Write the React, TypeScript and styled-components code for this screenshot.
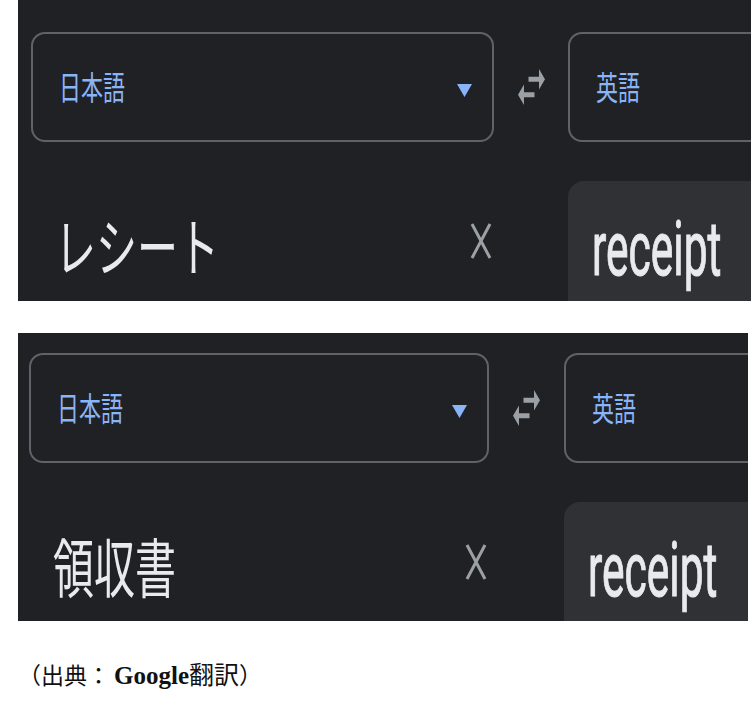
import React from "react";
import styled, { createGlobalStyle } from "styled-components";

const GlobalStyle = createGlobalStyle`
  html, body {
    margin: 0;
    padding: 0;
    background: #ffffff;
  }
  body {
    width: 751px;
    height: 705px;
    overflow: hidden;
  }
`;

const Page = styled.main`
  display: flex;
  flex-direction: column;
  width: 751px;
  padding-left: 18px;
  box-sizing: border-box;
`;

const Shot = styled.section<{ $w: number; $h: number; $pt: number; $pl: number; $mt: number }>`
  display: flex;
  flex-direction: column;
  width: ${(p) => p.$w}px;
  height: ${(p) => p.$h}px;
  margin-top: ${(p) => p.$mt}px;
  padding: ${(p) => p.$pt}px 0 0 ${(p) => p.$pl}px;
  box-sizing: border-box;
  background: #202124;
  overflow: hidden;
`;

const LangBar = styled.div`
  display: flex;
  align-items: center;
  height: 110px;
  flex-shrink: 0;
`;

const LangBox = styled.div<{ $w: number }>`
  display: flex;
  align-items: center;
  justify-content: space-between;
  flex-shrink: 0;
  width: ${(p) => p.$w}px;
  height: 100%;
  padding: 0 20px 0 26px;
  box-sizing: border-box;
  border: 2px solid #5f6368;
  border-radius: 14px;
`;

const LangLabel = styled.span`
  display: inline-block;
  font-family: "Noto Sans CJK JP", sans-serif;
  font-size: 22px;
  line-height: 1;
  color: #8ab4f8;
  transform: scaleY(1.5);
  margin-top: -4px;
`;

const DropArrow = styled.svg`
  width: 15px;
  height: 13px;
  margin-top: 6px;
  flex-shrink: 0;
`;

const SwapSlot = styled.div<{ $w: number }>`
  display: flex;
  justify-content: center;
  align-items: center;
  flex-shrink: 0;
  width: ${(p) => p.$w}px;
`;

const SwapIcon = styled.svg`
  width: 27px;
  height: 36px;
`;

const ContentRow = styled.div`
  display: flex;
  margin-top: 39px;
  height: 140px;
  flex-shrink: 0;
`;

const Source = styled.div<{ $w: number }>`
  display: flex;
  align-items: center;
  justify-content: space-between;
  flex-shrink: 0;
  width: ${(p) => p.$w}px;
  height: 128px;
  padding: 0 2px 0 24px;
  box-sizing: border-box;
`;

const SourceText = styled.span`
  display: inline-block;
  font-family: "Noto Sans CJK JP", sans-serif;
  font-size: 41px;
  line-height: 1;
  color: #e8eaed;
  transform: scaleY(1.55);
  margin-top: -4px;
`;

const ClearIcon = styled.svg`
  width: 22px;
  height: 36px;
  margin-top: -8px;
  flex-shrink: 0;
`;

const Output = styled.div<{ $w: number; $gap: number }>`
  flex-shrink: 0;
  width: ${(p) => p.$w}px;
  height: 100%;
  margin-left: ${(p) => p.$gap}px;
  padding: 32px 0 0 24px;
  box-sizing: border-box;
  background: #303134;
  border-top-left-radius: 16px;
`;

const OutputText = styled.span`
  display: inline-block;
  font-family: Roboto, "Liberation Sans", sans-serif;
  font-size: 42.5px;
  line-height: 1;
  color: #e8eaed;
  -webkit-text-stroke: 0.6px #e8eaed;
  transform: scaleY(1.78);
  transform-origin: left top;
`;

const Caption = styled.p`
  margin: 40px 0 0 0;
  font-family: "Liberation Serif", "Noto Sans CJK JP", serif;
  font-size: 23px;
  line-height: 1.2;
  color: #111111;
`;

const Colon = styled.span`
  margin-right: 4px;
`;

const SourceName = styled.span`
  font-size: 25px;
`;

const Brand = styled.b`
  font-weight: 700;
`;

type ShotProps = {
  source: string;
  w: number;
  h: number;
  pt: number;
  pl: number;
  mt: number;
  box: number;
  swap: number;
};

const TranslateShot = ({ source, w, h, pt, pl, mt, box, swap }: ShotProps) => (
  <Shot $w={w} $h={h} $pt={pt} $pl={pl} $mt={mt}>
    <LangBar>
      <LangBox $w={box}>
        <LangLabel>日本語</LangLabel>
        <DropArrow viewBox="7 10 10 5" preserveAspectRatio="none">
          <path d="M7 10l5 5 5-5z" fill="#8ab4f8" />
        </DropArrow>
      </LangBox>
      <SwapSlot $w={swap}>
        <SwapIcon viewBox="3 5 18 14" preserveAspectRatio="none">
          <path
            d="M6.99 11L3 15l3.99 4v-3H14v-2H6.99v-3zM21 9l-3.99-4v3H10v2h7.01v3L21 9z"
            fill="#9aa0a6"
          />
        </SwapIcon>
      </SwapSlot>
      <LangBox $w={box}>
        <LangLabel>英語</LangLabel>
      </LangBox>
    </LangBar>
    <ContentRow>
      <Source $w={box}>
        <SourceText>{source}</SourceText>
        <ClearIcon viewBox="0 0 22 36">
          <path d="M2 1L20 35M20 1L2 35" stroke="#9aa0a6" strokeWidth="3" fill="none" />
        </ClearIcon>
      </Source>
      <Output $w={box} $gap={swap}>
        <OutputText>receipt</OutputText>
      </Output>
    </ContentRow>
  </Shot>
);

export default function App() {
  return (
    <>
      <GlobalStyle />
      <Page>
        <TranslateShot source="レシート" w={733} h={301} pt={32} pl={13} mt={0} box={463} swap={74} />
        <TranslateShot source="領収書" w={730} h={288} pt={20} pl={11} mt={32} box={460} swap={75} />
        <Caption>
          （出典<Colon>：</Colon>
          <SourceName>
            <Brand>Google</Brand>翻訳
          </SourceName>
          ）
        </Caption>
      </Page>
    </>
  );
}
